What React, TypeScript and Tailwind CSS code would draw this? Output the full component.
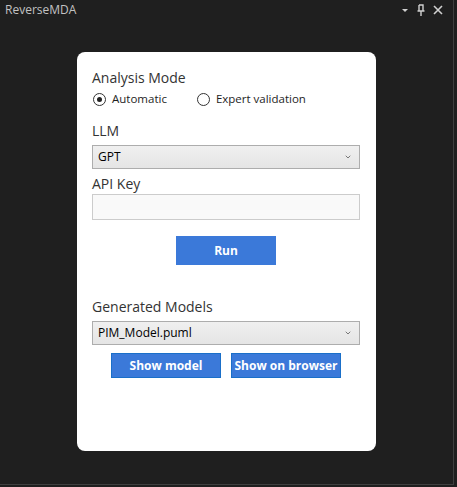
import { ChevronDown } from 'lucide-react';

const font = { fontFamily: '"Open Sans", "Noto Sans", sans-serif' };

function Radio({ label, checked }: { label: string; checked?: boolean }) {
  return (
    <label className="flex items-center gap-[6px] text-[11.5px] leading-[18px] text-[#1e1e1e]">
      <span className="flex h-[13px] w-[13px] items-center justify-center rounded-full border border-[#333] bg-white">
        {checked && <span className="h-[5px] w-[5px] rounded-full bg-[#222]" />}
      </span>
      {label}
    </label>
  );
}

function Select({ value }: { value: string }) {
  return (
    <div className="flex h-[24px] items-center justify-between border border-[#adadad] bg-gradient-to-b from-[#f0f0f0] to-[#e5e5e5] pl-[5px] pr-[7px] text-[12px] text-black">
      <span>{value}</span>
      <ChevronDown className="h-[8px] w-[8px] text-[#606060]" strokeWidth={2.5} />
    </div>
  );
}

function BlueButton({ label, className }: { label: string; className?: string }) {
  return (
    <button className={`h-[25px] border border-[#1a6fc9] bg-[#3b79d9] text-[12px] font-bold text-white ${className ?? ''}`}>
      {label}
    </button>
  );
}

export default function App() {
  return (
    <div className="h-[487px] w-[457px] bg-[#1f1f1f]" style={font}>
      <div className="flex h-[485px] w-[454px] flex-col border-b border-r border-[#3f3f3f]">
        <div className="flex h-[20px] items-center justify-between pl-[5px] pr-[9px]">
          <span className="text-[12px] text-[#c2c2c2]">ReverseMDA</span>
          <div className="flex items-center gap-[6px] text-[#d0d0d0]">
            <svg width="10" height="12" viewBox="0 0 10 12">
              <path d="M2 5 L8 5 L5 8 Z" fill="currentColor" />
            </svg>
            <svg width="10" height="14" viewBox="0 0 10 14">
              <path d="M3 2 H7 V8 M3 2 V8 M1.5 8 H8.5 M5 8 V13" stroke="currentColor" strokeWidth="1.4" fill="none" />
            </svg>
            <svg width="12" height="12" viewBox="0 0 12 12">
              <path d="M2 2 L10 10 M10 2 L2 10" stroke="currentColor" strokeWidth="1.6" />
            </svg>
          </div>
        </div>

        <div className="ml-[77px] mt-[32px] flex h-[399px] w-[299px] flex-col rounded-[8px] bg-white pl-[15px] pr-[16px] pt-[16px]">
          <div className="text-[14px] leading-[20px] text-[#333]">Analysis Mode</div>
          <div className="ml-[1px] mt-[2px] flex gap-[30px]">
            <Radio label="Automatic" checked />
            <Radio label="Expert validation" />
          </div>

          <div className="mt-[13px] text-[14px] leading-[20px] text-[#333]">LLM</div>
          <div className="mt-[4px]">
            <Select value="GPT" />
          </div>

          <div className="mt-[5px] text-[14px] leading-[20px] text-[#333]">API Key</div>
          <div className="h-[26px] border border-[#cccccc] bg-[#f9f9f9]" />

          <div className="mt-[16px] flex justify-center">
            <button className="h-[29px] w-[100px] bg-[#3b79d9] text-[12px] font-bold text-white">Run</button>
          </div>

          <div className="mt-[32px] text-[14px] leading-[20px] text-[#333]">Generated Models</div>
          <div className="mt-[4px]">
            <Select value="PIM_Model.puml" />
          </div>

          <div className="mt-[8px] flex justify-center gap-[10px]">
            <BlueButton label="Show model" className="w-[110px]" />
            <BlueButton label="Show on browser" className="w-[110px]" />
          </div>
        </div>
      </div>
    </div>
  );
}
